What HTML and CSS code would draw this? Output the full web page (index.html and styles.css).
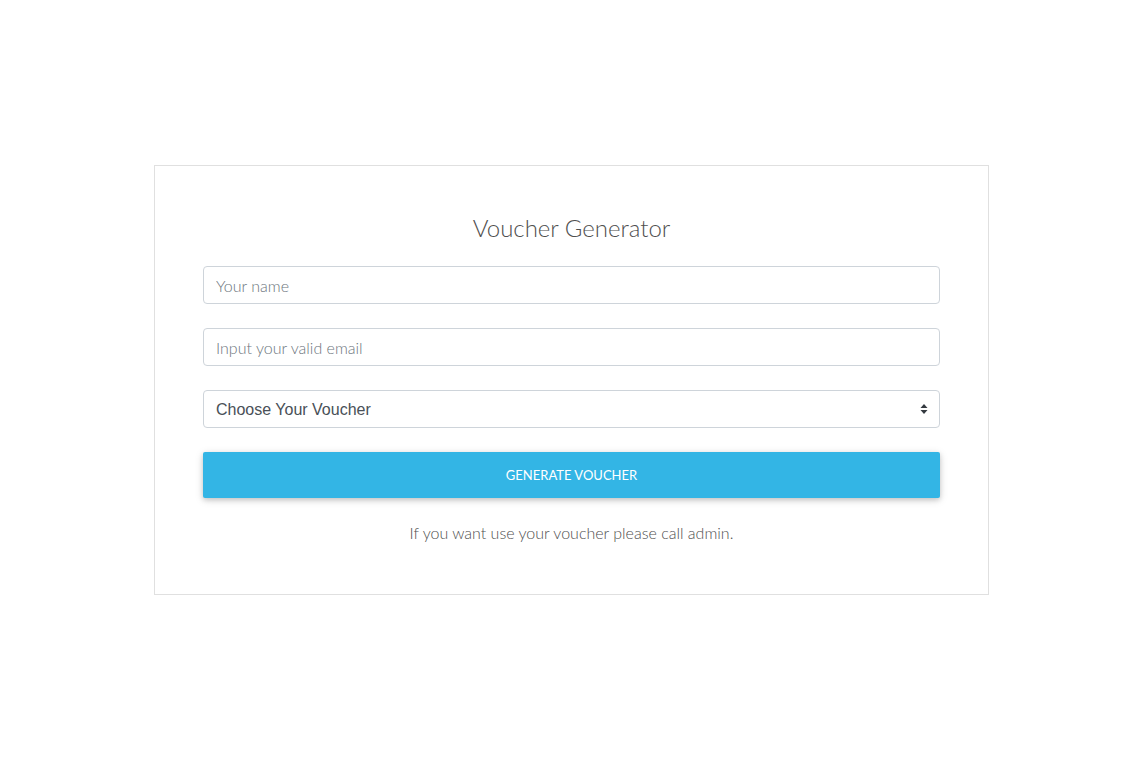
FILE: index.html
```html
<!DOCTYPE html>
<html lang="en">

<head>
    <meta charset="UTF-8">
    <meta name="viewport" content="width=device-width, initial-scale=1.0">
    <title>Voucher Generator</title>
    <link rel="stylesheet" href="styles.css">
</head>

<body>

    <div class="container">
        <form class="card" onsubmit="return false;">
            <h4 class="card-title">Voucher Generator</h4>

            <input type="text" class="form-control" placeholder="Your name">
            <input type="email" class="form-control" placeholder="Input your valid email">

            <div class="select-wrap">
                <select class="form-select">
                    <option selected>Choose Your Voucher</option>
                    <option>Voucher 10%</option>
                    <option>Voucher 25%</option>
                    <option>Voucher 50%</option>
                </select>
                <svg class="select-arrow" width="8" height="12" viewBox="0 0 8 12">
                    <path d="M4 1 L7.5 5 H0.5 Z" fill="#343a40"/>
                    <path d="M4 11 L7.5 7 H0.5 Z" fill="#343a40"/>
                </svg>
            </div>

            <button type="submit" class="btn">Generate Voucher</button>

            <p class="note">If you want use your voucher please call admin.</p>
        </form>
    </div>

</body>

</html>
```

FILE: styles.css
```css
body {
    font-family: Lato, "Open Sans", sans-serif;
    background-color: #fff;
    margin: 0;
    padding: 0;
}

.container {
    padding: 165px 1px 0 0;
    display: flex;
    justify-content: center;
}

.card {
    width: 835px;
    box-sizing: border-box;
    border: 1px solid #e0e0e0;
    padding: 44px 48px 50px;
    display: flex;
    flex-direction: column;
    gap: 24px;
}

.card-title {
    margin: 0 0 -4px;
    font-size: 24px;
    line-height: 36px;
    font-weight: 300;
    color: #4f4f4f;
    text-align: center;
}

.form-control,
.form-select {
    box-sizing: border-box;
    width: 100%;
    height: 38px;
    margin: 0;
    padding: 0 12px;
    border: 1px solid #ced4da;
    border-radius: 4px;
    background-color: #fff;
    font-family: Lato, sans-serif;
    font-size: 16px;
    font-weight: 300;
    color: #495057;
    outline: none;
}

.form-control::placeholder {
    color: #6c757d;
}

.select-wrap {
    position: relative;
}

.form-select {
    -webkit-appearance: none;
    appearance: none;
    font-family: "Liberation Sans", Arial, sans-serif;
    font-size: 16px;
    font-weight: 400;
    color: #495057;
}

.select-arrow {
    position: absolute;
    right: 12px;
    top: 13px;
    pointer-events: none;
}

.btn {
    height: 46px;
    border: none;
    border-radius: 2px;
    background-color: #33b5e5;
    color: #fff;
    font-family: Lato, sans-serif;
    font-size: 13px;
    font-weight: 400;
    text-transform: uppercase;
    box-shadow: 0 2px 5px rgba(0, 0, 0, 0.16), 0 2px 10px rgba(0, 0, 0, 0.12);
    cursor: pointer;
}

.btn:hover {
    background-color: #2aa3d0;
}

.note {
    margin: 0;
    font-size: 16px;
    line-height: 22px;
    font-weight: 300;
    color: #4f4f4f;
    text-align: center;
}
```
